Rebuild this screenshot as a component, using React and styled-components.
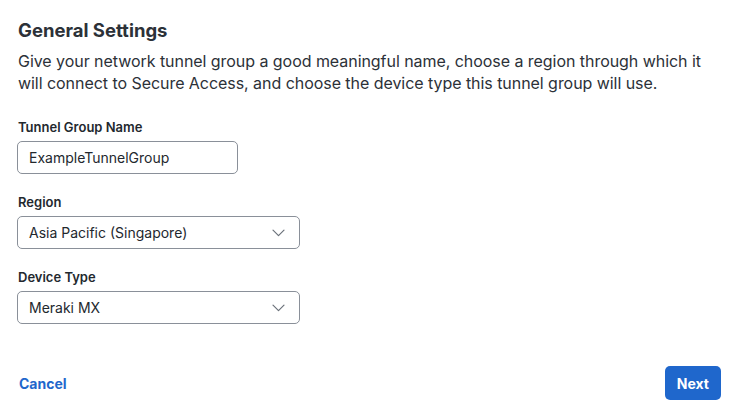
import React from "react";
import styled, { createGlobalStyle } from "styled-components";

const GlobalStyle = createGlobalStyle`
  html, body {
    margin: 0;
    padding: 0;
    background: #fff;
  }
  body {
    font-family: Inter, "Noto Sans", sans-serif;
    color: #23282e;
  }
`;

const Page = styled.div`
  width: 738px;
  height: 415px;
  box-sizing: border-box;
  padding: 17px 17px 0 17px;
  display: flex;
  flex-direction: column;
`;

const Title = styled.h2`
  margin: 0 0 0 1px;
  font-size: 18.5px;
  font-weight: 700;
  line-height: 26px;
  color: #2c3138;
`;

const Description = styled.p`
  margin: 7px 0 0 1px;
  font-size: 16px;
  line-height: 22px;
  color: #2c3138;
  letter-spacing: -0.05px;
`;

const Form = styled.div`
  display: flex;
  flex-direction: column;
  gap: 18px;
  margin-top: 23px;
`;

const Field = styled.div`
  display: flex;
  flex-direction: column;
  gap: 4px;
`;

const Label = styled.label`
  font-size: 13px;
  font-weight: 600;
  line-height: 20px;
  margin-left: 1px;
  color: #23282e;
`;

const Box = styled.div`
  box-sizing: border-box;
  width: ${(p) => p.$width}px;
  height: 33px;
  border: 1.5px solid #8a9099;
  border-radius: 5px;
  display: flex;
  align-items: center;
  justify-content: space-between;
  padding: 0 14px 0 11px;
  font-size: 14px;
  color: #23282e;
  background: #fff;
`;

const Chevron = () => (
  <svg width="13" height="8" viewBox="0 0 13 8" fill="none">
    <path d="M1 1.2l5.5 5.5L12 1.2" stroke="#6b717a" strokeWidth="1.2" strokeLinecap="round" strokeLinejoin="round" />
  </svg>
);

const Footer = styled.div`
  margin-top: auto;
  margin-bottom: 15px;
  display: flex;
  justify-content: space-between;
  align-items: center;
`;

const LinkButton = styled.button`
  border: none;
  background: none;
  padding: 0 0 0 2px;
  font-family: inherit;
  font-size: 14px;
  font-weight: 700;
  color: #1f67cc;
  cursor: pointer;
`;

const PrimaryButton = styled.button`
  border: none;
  border-radius: 5px;
  background: #1f67cc;
  color: #fff;
  font-family: inherit;
  font-size: 14px;
  font-weight: 700;
  height: 34px;
  padding: 0 12px;
  cursor: pointer;
`;

export default function App() {
  return (
    <>
      <GlobalStyle />
      <Page>
        <Title>General Settings</Title>
        <Description>
          Give your network tunnel group a good meaningful name, choose a region through which it
          will connect to Secure Access, and choose the device type this tunnel group will use.
        </Description>
        <Form>
          <Field>
            <Label>Tunnel Group Name</Label>
            <Box $width={221}>ExampleTunnelGroup</Box>
          </Field>
          <Field>
            <Label>Region</Label>
            <Box $width={283}>
              Asia Pacific (Singapore)
              <Chevron />
            </Box>
          </Field>
          <Field>
            <Label>Device Type</Label>
            <Box $width={283}>
              Meraki MX
              <Chevron />
            </Box>
          </Field>
        </Form>
        <Footer>
          <LinkButton>Cancel</LinkButton>
          <PrimaryButton>Next</PrimaryButton>
        </Footer>
      </Page>
    </>
  );
}
